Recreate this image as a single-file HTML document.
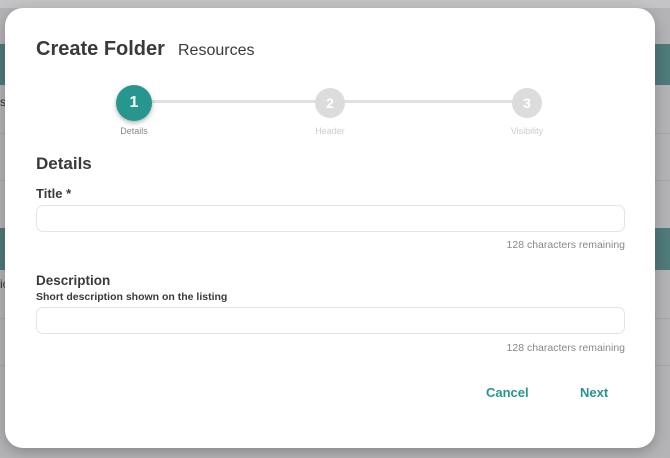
<!DOCTYPE html>
<html><head><style>
*{margin:0;padding:0;box-sizing:border-box}
body{width:670px;height:458px;overflow:hidden;background:#b4b4b7;font-family:"Liberation Sans",Arial,sans-serif;position:relative}
.bg{position:absolute;left:0;width:670px}
.m{position:absolute;left:5px;top:8px;width:650px;height:440px;background:#fff;border-radius:18px;box-shadow:0 4px 14px rgba(0,0,0,.25)}
.a{position:absolute;white-space:nowrap}
.in{position:absolute;left:31px;width:589px;height:27px;border:1px solid #e4e4e4;border-radius:7px}
.rem{position:absolute;right:30px;font-size:10.5px;color:#888}
</style></head><body>
<div class="bg" style="top:0;height:8px;background:#c4c4c6"></div>
<div class="bg" style="top:44px;height:41px;background:#4f7b7a"></div>
<div class="bg" style="top:228px;height:42px;background:#4f7b7a"></div>
<div class="bg" style="top:133px;height:1px;background:#a6a6a8"></div>
<div class="bg" style="top:180px;height:1px;background:#a6a6a8"></div>
<div class="bg" style="top:318px;height:1px;background:#a6a6a8"></div>
<div class="bg" style="top:365px;height:1px;background:#a6a6a8"></div>
<div class="a" style="left:0;top:95px;font-size:12px;color:#333">s</div>
<div class="a" style="left:0;top:277px;font-size:12px;color:#333">ic</div>
<div class="m">
<div class="a" style="left:31px;top:30px;font-size:20px;font-weight:bold;color:#3a3a3a">Create Folder</div>
<div class="a" style="left:173px;top:34px;font-size:16px;color:#3a3a3a">Resources</div>
<div class="a" style="left:129px;top:92px;width:393px;height:3px;background:#e0e0e0"></div>
<div class="a" style="left:111px;top:77px;width:36px;height:36px;border-radius:50%;background:#26968f;color:#fff;font-weight:bold;font-size:16px;text-align:center;line-height:36px;box-shadow:0 2px 5px rgba(0,0,0,.3)">1</div>
<div class="a" style="left:310px;top:80px;width:30px;height:30px;border-radius:50%;background:#dcdcdc;color:#fff;font-weight:bold;font-size:14px;text-align:center;line-height:30px">2</div>
<div class="a" style="left:507px;top:80px;width:30px;height:30px;border-radius:50%;background:#dcdcdc;color:#fff;font-weight:bold;font-size:14px;text-align:center;line-height:30px">3</div>
<div class="a" style="left:99px;top:118px;width:60px;text-align:center;font-size:9px;color:#888">Details</div>
<div class="a" style="left:295px;top:118px;width:60px;text-align:center;font-size:9px;color:#ccc">Header</div>
<div class="a" style="left:492px;top:118px;width:60px;text-align:center;font-size:9px;color:#ccc">Visibility</div>
<div class="a" style="left:31px;top:146px;font-size:17px;font-weight:bold;color:#3a3a3a">Details</div>
<div class="a" style="left:31px;top:178px;font-size:13px;font-weight:bold;color:#3a3a3a">Title *</div>
<div class="in" style="top:197px"></div>
<div class="a rem" style="top:231px">128 characters remaining</div>
<div class="a" style="left:31px;top:265px;font-size:13.5px;font-weight:bold;color:#3a3a3a">Description</div>
<div class="a" style="left:31px;top:283px;font-size:10.5px;font-weight:bold;color:#3a3a3a">Short description shown on the listing</div>
<div class="in" style="top:299px"></div>
<div class="a rem" style="top:334px">128 characters remaining</div>
<div class="a" style="left:481px;top:377px;font-size:13px;font-weight:bold;color:#26968f">Cancel</div>
<div class="a" style="left:575px;top:377px;font-size:13px;font-weight:bold;color:#26968f">Next</div>
</div>
</body></html>
